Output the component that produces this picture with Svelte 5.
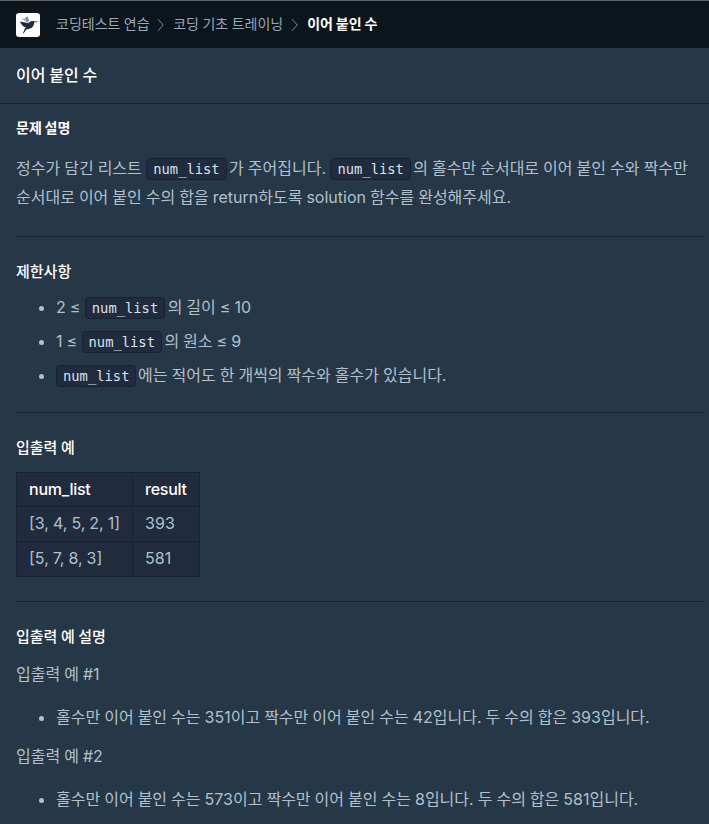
<script lang="ts">
  const crumbs = ['코딩테스트 연습', '코딩 기초 트레이닝'];
  const title = '이어 붙인 수';

  const samples = [
    { input: '[3, 4, 5, 2, 1]', result: 393 },
    { input: '[5, 7, 8, 3]', result: 581 },
  ];

  const notes = [
    '홀수만 이어 붙인 수는 351이고 짝수만 이어 붙인 수는 42입니다. 두 수의 합은 393입니다.',
    '홀수만 이어 붙인 수는 573이고 짝수만 이어 붙인 수는 8입니다. 두 수의 합은 581입니다.',
  ];
</script>

<div class="page">
  <header class="nav">
    <svg class="logo" viewBox="0 0 24 24" aria-hidden="true">
      <rect width="24" height="24" rx="3" fill="#fff" />
      <path d="M5.2 5.4 8.8 5.6l2.4-2.4 1.4 4.2-1 2.5z" fill="#b4b9c0" />
      <path d="M9 5.8 11.6 3.2l1.5 4.9-2 .9z" fill="#858d98" />
      <path
        d="M4 8.4 11.6 10c.8.1 1.4-.3 2-.9 1-1.1 2.5-1.5 3.8-.9L23 8.4l-4.8 1c-.3 3-1.6 5.6-4.8 6.3l-3.1.9L7.5 20.4l-.5-.2 1.7-4.4 1.2-1.6C7.1 13.8 4.9 11.3 4 8.4z"
        fill="#202b3d"
      />
    </svg>
    <nav class="crumbs">
      {#each crumbs as crumb}
        <span>{crumb}</span>
        <svg class="arrow" viewBox="0 0 8 14" aria-hidden="true">
          <path d="M1 1.2 6.2 7 1 12.8" fill="none" stroke="currentColor" />
        </svg>
      {/each}
      <strong>{title}</strong>
    </nav>
  </header>

  <h1 class="title">{title}</h1>

  <main class="guide">
    <h6>문제 설명</h6>
    <p class="intro">
      정수가 담긴 리스트 <code>num_list</code>가 주어집니다. <code>num_list</code>의 홀수만 순서대로 이어 붙인 수와 짝수만 순서대로 이어 붙인 수의 합을 return하도록 solution 함수를 완성해주세요.
    </p>
    <hr />

    <h5>제한사항</h5>
    <ul class="limits">
      <li>2 ≤ <code>num_list</code>의 길이 ≤ 10</li>
      <li>1 ≤ <code>num_list</code>의 원소 ≤ 9</li>
      <li><code>num_list</code>에는 적어도 한 개씩의 짝수와 홀수가 있습니다.</li>
    </ul>
    <hr />

    <h5>입출력 예</h5>
    <table>
      <thead>
        <tr><th>num_list</th><th>result</th></tr>
      </thead>
      <tbody>
        {#each samples as sample}
          <tr><td>{sample.input}</td><td>{sample.result}</td></tr>
        {/each}
      </tbody>
    </table>
    <hr />

    <h5>입출력 예 설명</h5>
    {#each notes as note, i}
      <p class="case">입출력 예 #{i + 1}</p>
      <ul class="note">
        <li>{note}</li>
      </ul>
    {/each}
  </main>
</div>

<style>
  :global(body) {
    margin: 0;
    background: #263747;
  }
  .page {
    height: 824px;
    overflow: hidden;
    box-sizing: border-box;
    border-top: 1px solid #5e6367;
    background: #263747;
    color: #b2c0cc;
    font-family: Inter, 'Noto Sans CJK KR', sans-serif;
    font-size: 16px;
    line-height: 28.8px;
    word-break: keep-all;
    word-spacing: -0.48px;
  }
  .nav {
    display: flex;
    align-items: center;
    gap: 16px;
    height: 47px;
    padding: 0 16px;
    background: #0c151c;
  }
  .logo {
    width: 24px;
    height: 24px;
    flex: none;
    margin-top: 1px;
  }
  .crumbs {
    display: flex;
    align-items: center;
    gap: 8px;
    color: #98a8b9;
    font-size: 14px;
    line-height: 20px;
  }
  .crumbs span,
  .crumbs strong {
    margin-top: -1px;
  }
  .crumbs span {
    margin-right: -0.4px;
  }
  .crumbs strong {
    margin-left: 0.4px;
    color: #fff;
    font-weight: 700;
  }
  .arrow {
    width: 8px;
    height: 14px;
    color: #78909f;
  }
  .title {
    height: 55px;
    margin: 0;
    padding: 0 16px;
    border-bottom: 1px solid #172334;
    color: #fff;
    font-size: 16px;
    font-weight: 500;
    line-height: 54px;
  }
  .guide {
    padding: 14px 4px 0 16px;
  }
  h5,
  h6 {
    margin: 0;
    color: #fff;
    line-height: 20px;
  }
  h5 {
    padding-top: 1px;
    font-size: 15px;
    font-weight: 500;
  }
  h6 {
    font-size: 14px;
    font-weight: 700;
  }
  p,
  ul {
    margin: 0;
  }
  .intro {
    padding-top: 16px;
  }
  hr {
    height: 1px;
    margin: 24px 0;
    border: 0;
    background: #172334;
  }
  code {
    display: inline-block;
    margin: 0 2.4px 0 0.4px;
    padding: 0 6px;
    border: 1px solid #172334;
    border-radius: 4px;
    background: #202b3d;
    color: #d7e2eb;
    font-family: 'DejaVu Sans Mono', monospace;
    font-size: 13.8px;
    line-height: 20px;
  }
  ul {
    padding-left: 40px;
  }
  .limits {
    display: flex;
    flex-direction: column;
    gap: 5.2px;
    padding-top: 11px;
  }
  .limits + hr {
    margin-top: 23px;
  }
  .limits li:last-child code {
    margin: 0 1.6px 0 0;
  }
  table {
    margin-top: 14px;
    border-collapse: collapse;
    background: #202b3d;
    line-height: 24px;
  }
  th,
  td {
    padding: 4px 12px 6px;
    border: 1px solid #172334;
    text-align: left;
  }
  th {
    padding-bottom: 5px;
    color: #fff;
    font-weight: 500;
    letter-spacing: -0.25px;
  }
  .case {
    padding-top: 13px;
  }
  .note {
    padding-top: 14px;
  }
  .note + .case {
    padding-top: 10.4px;
  }
</style>
